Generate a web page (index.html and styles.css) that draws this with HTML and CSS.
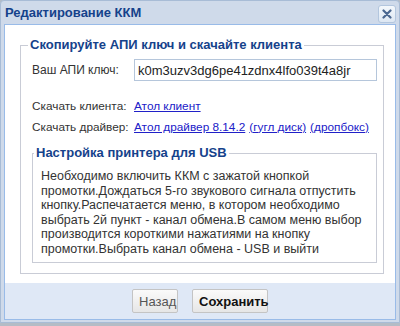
FILE: index.html
```html
<!DOCTYPE html>
<html lang="ru">
<head>
    <meta charset="UTF-8">
    <title>Редактирование ККМ</title>
    <link rel="stylesheet" href="styles.css">
</head>
<body>
    <div class="window">
        <div class="window-header">
            <span class="window-title">Редактирование ККМ</span>
            <button class="close-btn" title="Закрыть">
                <svg width="10" height="10" viewBox="0 0 10 10">
                    <path d="M1.5 1.5 L8.5 8.5 M8.5 1.5 L1.5 8.5" stroke="#4a6790" stroke-width="2.2" stroke-linecap="round"/>
                </svg>
            </button>
        </div>

        <div class="window-body">
            <div class="content">
                <fieldset class="box">
                    <legend>Скопируйте АПИ ключ и скачайте клиента</legend>

                    <div class="row row-key">
                        <label class="label">Ваш АПИ ключ:</label>
                        <input class="key-input" type="text" value="k0m3uzv3dg6pe41zdnx4lfo039t4a8jr">
                    </div>

                    <div class="row">
                        <span class="label">Скачать клиента:</span>
                        <a href="#">Атол клиент</a>
                    </div>

                    <div class="row">
                        <span class="label">Скачать драйвер:</span>
                        <a href="#">Атол драйвер 8.14.2</a>
                        <a href="#">(гугл диск)</a>
                        <a href="#">(дропбокс)</a>
                    </div>

                    <fieldset class="box inner">
                        <legend>Настройка принтера для USB</legend>
                        <p class="note">Необходимо включить ККМ с зажатой кнопкой промотки.Дождаться 5-го звукового сигнала отпустить кнопку.Распечатается меню, в котором необходимо выбрать 2й пункт - канал обмена.В самом меню выбор производится короткими нажатиями на кнопку промотки.Выбрать канал обмена - USB и выйти</p>
                    </fieldset>
                </fieldset>
            </div>

            <div class="footer">
                <button class="btn btn-back">Назад</button>
                <button class="btn btn-save">Сохранить</button>
            </div>
        </div>
    </div>
</body>
</html>
```

FILE: styles.css
```css
body {
    margin: 0;
    background-color: #b4bcc6;
    font-family: 'Liberation Sans', Arial, sans-serif;
    font-size: 13px;
    color: #333;
}

/* окно */
.window {
    width: 400px;
    height: 323px;
    box-sizing: border-box;
    border: 1px solid #a8bcd6;
    border-radius: 4px 4px 0 0;
    background-color: #cfdaea;
    padding: 0 3px 2px 3px;
    display: flex;
    flex-direction: column;
}

.window-header {
    height: 23px;
    display: flex;
    align-items: center;
    justify-content: space-between;
}

.window-title {
    font-weight: bold;
    font-size: 13px;
    color: #15428b;
    padding-left: 1px;
}

.close-btn {
    width: 18px;
    height: 18px;
    margin-top: 2px;
    padding: 0;
    border: 1px solid #b3c6de;
    border-radius: 3px;
    background: linear-gradient(#f4f8fc, #dde7f3);
    display: flex;
    align-items: center;
    justify-content: center;
    cursor: pointer;
}

.window-body {
    flex: 1;
    border: 1px solid #99bbe8;
    background-color: #fff;
    display: flex;
    flex-direction: column;
}

.content {
    flex: 1;
    padding: 12px 11px 0 15px;
}

/* блоки */
.box {
    margin: 0;
    min-width: 0;
    border: 1px solid #c9ccd6;
    padding: 0 6px 10px 7px;
}

.box legend {
    font-weight: bold;
    color: #15428b;
    padding: 0 2px;
    line-height: 16px;
}

.row {
    display: flex;
    align-items: center;
    gap: 4px;
    padding-left: 4px;
    height: 21px;
    font-size: 11.8px;
    white-space: nowrap;
}

.row-key {
    height: 22px;
    margin-top: 6px;
    margin-bottom: 14px;
    font-size: 12px;
}

.label {
    width: 98px;
    flex-shrink: 0;
    color: #333;
}

.key-input {
    flex: 1;
    min-width: 0;
    height: 22px;
    box-sizing: border-box;
    border: 1px solid #b5c6db;
    padding: 0 3px;
    font-family: 'Liberation Sans', Arial, sans-serif;
    font-size: 13px;
    color: #222;
    outline: none;
}

a {
    color: #2020c8;
    text-decoration: underline;
}

.inner {
    margin: 8px 0 0 4px;
    padding: 0 6px 5px 1px;
}

.inner legend {
    padding: 0 2px;
}

.note {
    margin: 8px 0 0 7px;
    font-size: 12.5px;
    line-height: 14.6px;
    color: #333;
}

/* кнопки */
.footer {
    height: 36px;
    background-color: #dfe8f6;
    display: flex;
    align-items: center;
    justify-content: center;
    gap: 14px;
}

.btn {
    height: 24px;
    border: 1px solid #c4c4c4;
    border-radius: 2px;
    background: linear-gradient(#fafafa, #e6e6e6);
    font-family: 'Liberation Sans', Arial, sans-serif;
    font-size: 13px;
    padding: 0 6px;
    cursor: pointer;
}

.btn-back {
    color: #555;
    width: 46px;
}

.btn-save {
    color: #111;
    font-weight: bold;
    width: 76px;
}
```
